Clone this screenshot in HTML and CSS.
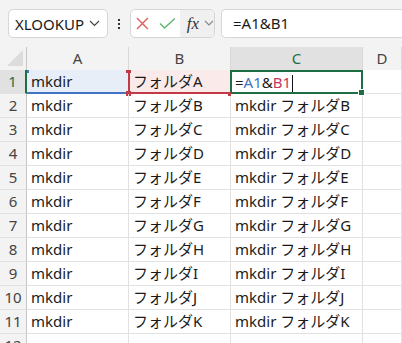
FILE: index.html
```html
<!DOCTYPE html>
<html lang="ja">
<head>
  <meta charset="UTF-8" />
  <title>Sheet</title>
  <link rel="stylesheet" href="styles.css">
</head>
<body>
  <div class="toolbar">
    <div class="namebox">
      <span>XLOOKUP</span>
      <svg class="chev" width="11" height="7" viewBox="0 0 11 7"><path d="M1 1 L5.5 5.5 L10 1" fill="none" stroke="#444" stroke-width="1.2"/></svg>
    </div>
    <div class="dots"><i></i><i></i><i></i></div>
    <div class="fbuttons">
      <svg class="cancel" width="13" height="13" viewBox="0 0 13 13"><path d="M1 1 L12 12 M12 1 L1 12" stroke="#e2605c" stroke-width="1.4" fill="none"/></svg>
      <svg class="enter" width="17" height="11" viewBox="0 0 17 11"><path d="M1 5.5 L5.5 10 L16 0.5" stroke="#5fb36b" stroke-width="1.4" fill="none"/></svg>
      <div class="fx">
        <span>fx</span>
        <svg width="10" height="7" viewBox="0 0 10 7"><path d="M1 1 L5 5 L9 1" fill="none" stroke="#888" stroke-width="1.1"/></svg>
      </div>
    </div>
    <div class="finput">=A1&amp;B1</div>
  </div>

  <div class="sheet">
    <div class="corner"><span class="tri"></span></div>
    <div class="colhead">A</div>
    <div class="colhead">B</div>
    <div class="colhead sel">C</div>
    <div class="colhead">D</div>

    <div class="rowhead sel">1</div>
    <div class="cell ref-a">mkdir</div>
    <div class="cell ref-b">フォルダA</div>
    <div class="cell active"><span>=</span><span class="c-a">A1</span><span>&amp;</span><span class="c-b">B1</span><span class="caret"></span></div>
    <div class="cell"></div>

    <div class="rowhead">2</div><div class="cell">mkdir</div><div class="cell">フォルダB</div><div class="cell">mkdir フォルダB</div><div class="cell"></div>
    <div class="rowhead">3</div><div class="cell">mkdir</div><div class="cell">フォルダC</div><div class="cell">mkdir フォルダC</div><div class="cell"></div>
    <div class="rowhead">4</div><div class="cell">mkdir</div><div class="cell">フォルダD</div><div class="cell">mkdir フォルダD</div><div class="cell"></div>
    <div class="rowhead">5</div><div class="cell">mkdir</div><div class="cell">フォルダE</div><div class="cell">mkdir フォルダE</div><div class="cell"></div>
    <div class="rowhead">6</div><div class="cell">mkdir</div><div class="cell">フォルダF</div><div class="cell">mkdir フォルダF</div><div class="cell"></div>
    <div class="rowhead">7</div><div class="cell">mkdir</div><div class="cell">フォルダG</div><div class="cell">mkdir フォルダG</div><div class="cell"></div>
    <div class="rowhead">8</div><div class="cell">mkdir</div><div class="cell">フォルダH</div><div class="cell">mkdir フォルダH</div><div class="cell"></div>
    <div class="rowhead">9</div><div class="cell">mkdir</div><div class="cell">フォルダI</div><div class="cell">mkdir フォルダI</div><div class="cell"></div>
    <div class="rowhead">10</div><div class="cell">mkdir</div><div class="cell">フォルダJ</div><div class="cell">mkdir フォルダJ</div><div class="cell"></div>
    <div class="rowhead">11</div><div class="cell">mkdir</div><div class="cell">フォルダK</div><div class="cell">mkdir フォルダK</div><div class="cell"></div>
    <div class="rowhead">12</div><div class="cell"></div><div class="cell"></div><div class="cell"></div><div class="cell"></div>
  </div>
</body>
</html>
```

FILE: styles.css
```css
body {
  margin: 0;
  padding: 0;
  background: #f3f3f3;
  font-family: "Noto Sans", "Noto Sans CJK JP", sans-serif;
  font-size: 15px;
  color: #1a1a1a;
  overflow: hidden;
}

.toolbar {
  height: 47px;
  display: flex;
  align-items: center;
  padding-left: 8px;
}

.namebox {
  width: 100px;
  height: 29px;
  box-sizing: border-box;
  background: white;
  border: 1px solid #d6d6d6;
  border-radius: 5px;
  display: flex;
  align-items: center;
  justify-content: space-between;
  padding: 0 7px 0 6px;
}

.dots {
  width: 22px;
  display: flex;
  flex-direction: column;
  align-items: center;
  gap: 2px;
}

.dots i {
  width: 2px;
  height: 2px;
  background: #333;
}

.fbuttons {
  width: 85px;
  height: 29px;
  box-sizing: border-box;
  background: white;
  border: 1px solid #d6d6d6;
  border-radius: 5px;
  display: flex;
  align-items: center;
  overflow: hidden;
}

.cancel {
  margin-left: 5px;
}

.enter {
  margin-left: 10px;
}

.fx {
  margin-left: 4px;
  flex: 1;
  height: 100%;
  background: #f0f0f0;
  display: flex;
  align-items: center;
  padding-left: 7px;
  gap: 5px;
}

.fx span {
  font-family: "Liberation Serif", serif;
  font-style: italic;
  font-size: 17px;
  color: #333;
}

.finput {
  margin-left: 6px;
  flex: 1;
  height: 29px;
  box-sizing: border-box;
  background: white;
  border: 1px solid #d6d6d6;
  border-right: none;
  border-radius: 5px 0 0 5px;
  padding-left: 11px;
  line-height: 27px;
}

.sheet {
  display: grid;
  grid-template-columns: 27px 102px 102px 132px 1fr;
  grid-template-rows: 23px;
  grid-auto-rows: 24px;
  background: white;
}

.corner {
  position: relative;
  background: #f3f3f3;
  border-right: 1px solid #c6c6c6;
}

.tri {
  position: absolute;
  right: 3px;
  bottom: 4px;
  width: 0;
  height: 0;
  border-left: 16px solid transparent;
  border-bottom: 16px solid #dcdcdc;
}

.colhead {
  background: #f3f3f3;
  border-right: 1px solid #d8d8d8;
  text-align: center;
  line-height: 23px;
  color: #444;
}

.colhead.sel {
  background: #e1e1e1;
  color: #1e6e43;
}

.rowhead {
  background: #f3f3f3;
  border-right: 1px solid #c6c6c6;
  border-bottom: 1px solid #e1e1e1;
  text-align: center;
  line-height: 23px;
  color: #444;
}

.rowhead.sel {
  background: #e1e1e1;
  color: #1e6e43;
  border-right: 2px solid #1e6e43;
}

.cell {
  position: relative;
  border-right: 1px solid #e1e1e1;
  border-bottom: 1px solid #e1e1e1;
  padding-left: 4px;
  line-height: 23px;
  white-space: nowrap;
}

.ref-a {
  background: #e8eef8;
  border-bottom: 2px solid #4472c4;
}

.ref-a::before {
  content: "";
  position: absolute;
  left: 0;
  top: 0;
  width: 2px;
  height: 3px;
  background: #4472c4;
}

.ref-b {
  background: #fbeaea;
  border-left: 2px solid #c23a45;
  border-bottom: 2px solid #c23a45;
  margin-left: -1px;
  padding-left: 3px;
}

.ref-b::before,
.ref-b::after {
  content: "";
  position: absolute;
  left: -4px;
  width: 5px;
  height: 5px;
  background: #c23a45;
}

.ref-b::before {
  top: 0;
  height: 3px;
}

.ref-b::after {
  bottom: -4px;
}

.active {
  border: 2px solid #1e6e43;
  margin-left: -1px;
  padding-left: 3px;
  line-height: 21px;
  z-index: 1;
}

.active::after {
  content: "";
  position: absolute;
  right: -4px;
  bottom: -4px;
  width: 5px;
  height: 5px;
  background: #1e6e43;
  border: 1px solid white;
}

.active::before {
  content: "";
  position: absolute;
  left: -4px;
  bottom: -4px;
  width: 3px;
  height: 4px;
  background: #c23a45;
}

.c-a {
  color: #4472c4;
}

.c-b {
  color: #c2395b;
}

.caret {
  display: inline-block;
  width: 1px;
  height: 17px;
  background: #111;
  vertical-align: middle;
  margin-left: 1px;
}
```
